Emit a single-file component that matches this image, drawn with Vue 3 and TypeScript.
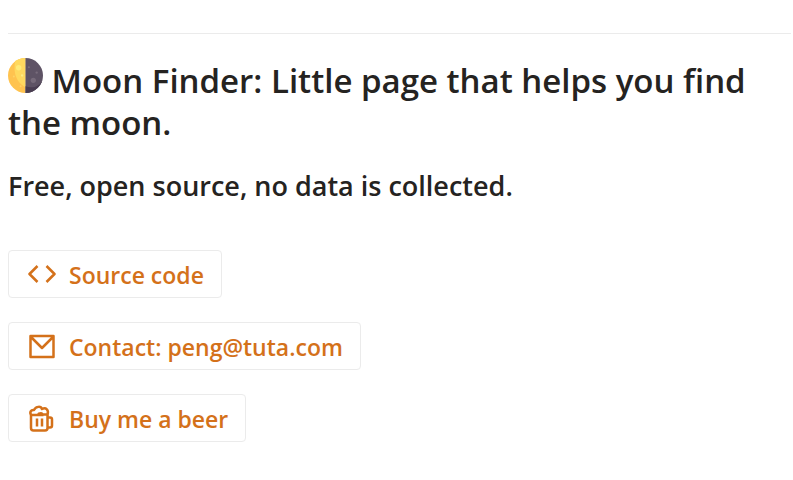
<script setup lang="ts">
interface ActionLink {
  label: string
  href: string
  icon: 'code' | 'mail' | 'beer'
}

const links: ActionLink[] = [
  { label: 'Source code', href: '#source', icon: 'code' },
  { label: 'Contact: peng@tuta.com', href: 'mailto:peng@tuta.com', icon: 'mail' },
  { label: 'Buy me a beer', href: '#beer', icon: 'beer' },
]
</script>

<template>
  <main class="page">
    <hr class="divider" />
    <h1 class="title">
      <svg class="moon" viewBox="0 0 36 36" aria-hidden="true">
        <clipPath id="disc"><circle cx="18" cy="18" r="18" /></clipPath>
        <g clip-path="url(#disc)">
          <rect width="18" height="36" fill="#ffc34f" />
          <path d="M8 0H18V30C10 26 4 17 8 0Z" fill="#ffd95f" />
          <rect x="18" width="18" height="36" fill="#5e5365" />
          <path d="M18 29C25 32 33 29 36 22V36H18Z" fill="#493d51" />
          <circle cx="11" cy="10" r="2.8" fill="#ffea78" />
          <circle cx="14.5" cy="18" r="1.2" fill="#ffed86" />
          <circle cx="6" cy="19" r="1" fill="#ffd467" />
          <circle cx="13" cy="29" r="1" fill="#ffd467" />
          <circle cx="26" cy="23" r="2.7" fill="#776b7b" />
          <circle cx="29.5" cy="15" r="1.2" fill="#776b7b" />
          <circle cx="21.5" cy="9.5" r="1.1" fill="#776b7b" />
        </g>
      </svg>
      Moon Finder: Little page that helps you find the moon.
    </h1>
    <h2 class="subtitle">Free, open source, no data is collected.</h2>
    <nav class="links" aria-label="Project links">
      <a v-for="link in links" :key="link.icon" class="link" :href="link.href">
        <svg class="icon" viewBox="0 0 28 28" aria-hidden="true">
          <path v-if="link.icon === 'code'" d="M9.5 5 1.5 13l8 8M18.5 5l8 8-8 8" />
          <path v-else-if="link.icon === 'mail'" d="M2.5 3h23v21h-23ZM3 4l11 11L25 4" />
          <g v-else>
            <path d="M3 9.5V23q0 2.5 2.5 2.5h11.500q2.500 0 2.500-2.500V9.500M3 10H15.500M19.500 12.500h2.500q2 0 2 2v6q0 2-2 2h-2.500" />
            <path d="M3.500 10.500C1 7.500 3 4.500 6 5C8 1 13 1 14 4C18 2 21 5 19.500 9.500H14.500C13.500 6.500 11.500 9.500 9.500 8.500" />
            <path d="M9 13.500v8M14 13.500v8" />
          </g>
        </svg>
        <span>{{ link.label }}</span>
      </a>
    </nav>
  </main>
</template>

<style>
body {
  margin: 0;
  background: #fff;
}
</style>

<style scoped>
.page {
  padding: 33px 2px 38px 8px;
  color: #252321;
  font-family: "Open Sans", "Segoe UI", "Noto Sans", sans-serif;
  font-weight: 600;
}

.divider {
  height: 1px;
  margin: 0 0 24px;
  border: 0;
  background: #ebebeb;
}

.title {
  margin: 0;
  font-size: 33px;
  font-weight: 600;
  line-height: 42px;
}

.moon {
  width: 35px;
  height: 35px;
}

.subtitle {
  margin: 24px 0 46px;
  font-size: 27px;
  font-weight: 600;
  line-height: 36px;
}

.links {
  display: flex;
  flex-direction: column;
  align-items: flex-start;
  gap: 24px;
}

.link {
  box-sizing: border-box;
  display: flex;
  align-items: center;
  gap: 13px;
  height: 48px;
  padding: 2px 17px 0 19px;
  border: 1px solid #ebebeb;
  border-radius: 4px;
  color: #d4711a;
  font-size: 23px;
  line-height: 32px;
  text-decoration: none;
}

.icon {
  width: 28px;
  height: 28px;
  fill: none;
  stroke: currentColor;
  stroke-width: 2.5;
  stroke-linejoin: round;
}
</style>
